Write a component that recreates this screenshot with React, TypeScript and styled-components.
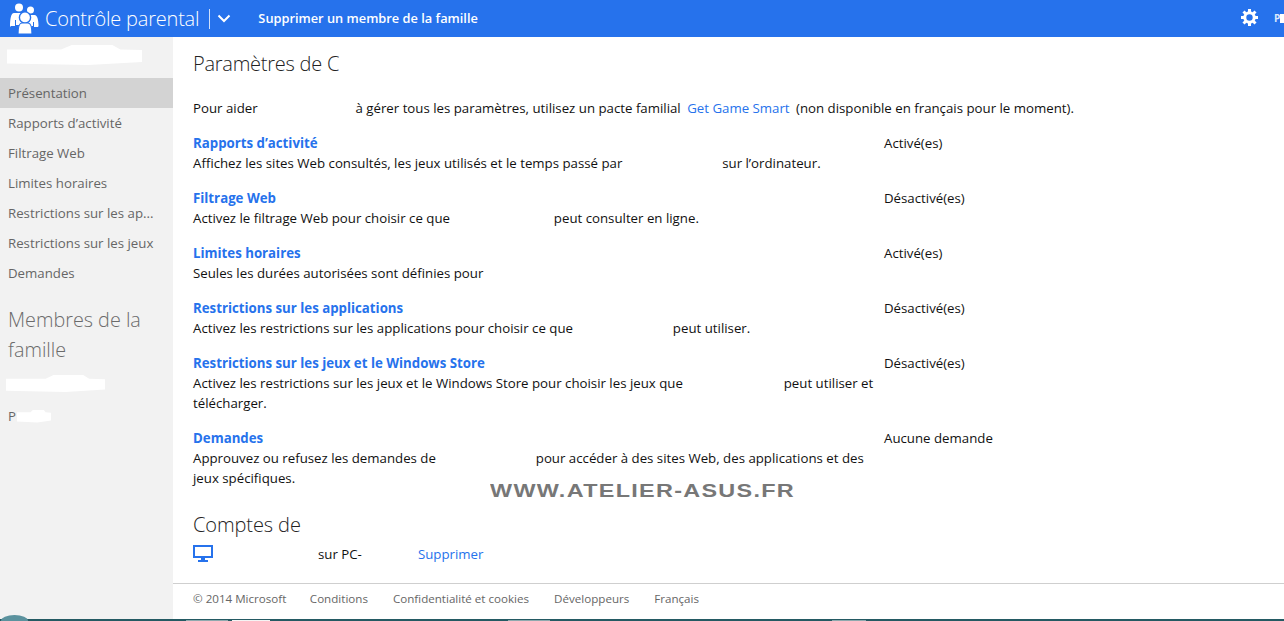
import React from 'react'
import styled, { createGlobalStyle } from 'styled-components'

const GlobalStyle = createGlobalStyle`
  html, body {
    margin: 0;
    height: 100%;
    overflow: hidden;
    background: #fff;
  }
  body {
    font-family: "Open Sans", "Noto Sans", sans-serif;
    font-size: 13.25px;
    color: #111;
  }
`

const Page = styled.div`
  position: relative;
  width: 1284px;
  height: 621px;
  display: flex;
  flex-direction: column;
  overflow: hidden;
`

const TopBar = styled.header`
  height: 37px;
  flex: none;
  background: #2672ec;
  color: #fff;
  display: flex;
  align-items: center;
  padding-left: 10px;
  overflow: hidden;
`

const AppTitle = styled.div`
  font-size: 20px;
  font-weight: 300;
  margin-left: 6px;
  letter-spacing: -0.2px;
  white-space: nowrap;
`

const Divider = styled.span`
  width: 1px;
  height: 20px;
  background: #cfe0fb;
  margin-left: 10px;
`

const Chevron = styled.svg`
  width: 14px;
  height: 9px;
  margin-left: 7px;
`

const BarAction = styled.div`
  font-size: 12.8px;
  font-weight: 600;
  margin-left: 27px;
  margin-bottom: 1px;
  white-space: nowrap;
`

const BarRight = styled.div`
  margin-left: auto;
  display: flex;
  align-items: center;
  gap: 16px;
  width: 43px;
  flex: none;
`

const GearWrap = styled.span`
  display: flex;
  margin-bottom: 3px;
`

const UserInitial = styled.span`
  font-size: 10px;
  font-weight: 700;
  color: #dce8fc;
  display: flex;
  align-items: center;
  margin-bottom: 1px;
`

const UserBlot = styled.span`
  width: 5px;
  height: 9px;
  background: #fff;
`

const Body = styled.div`
  flex: 1;
  display: flex;
  min-height: 0;
`

const Sidebar = styled.aside`
  width: 173px;
  flex: none;
  background: #f2f2f2;
  color: #666;
  padding-top: 8px;
`

const Blot = styled.div<{ $w: number; $h: number; $ml?: number; $mt?: number }>`
  width: ${(p) => p.$w}px;
  height: ${(p) => p.$h}px;
  margin-left: ${(p) => p.$ml ?? 0}px;
  margin-top: ${(p) => p.$mt ?? 0}px;
  background: #fff;
  clip-path: polygon(0 22%, 40% 22%, 48% 0, 78% 0, 84% 22%, 100% 25%, 100% 85%, 60% 100%, 0 92%);
`

const NavList = styled.nav`
  margin-top: 13px;
`

const NavItem = styled.div<{ $active?: boolean }>`
  height: 30px;
  line-height: 30px;
  padding-left: 8px;
  background: ${(p) => (p.$active ? '#d3d3d3' : 'transparent')};
  white-space: nowrap;
  overflow: hidden;
`

const SideHeading = styled.div`
  font-size: 19.8px;
  font-weight: 300;
  line-height: 30px;
  padding: 17px 8px 0;
  color: #6b6b6b;
`

const MemberRow = styled.div`
  display: flex;
  align-items: center;
  padding-left: 8px;
  margin-top: 14px;
  height: 20px;
`

const Main = styled.main`
  flex: 1;
  min-width: 0;
  display: flex;
  flex-direction: column;
`

const Content = styled.div`
  flex: 1;
  padding: 0 20px;
`

const PageTitle = styled.h1`
  margin: 0;
  padding-top: 12px;
  font-size: 20px;
  line-height: 30px;
  font-weight: 300;
  letter-spacing: -0.25px;
  color: #222;
`

const Intro = styled.p`
  margin: 19px 0 0;
  line-height: 20px;
  white-space: nowrap;
`

const InlineLink = styled.span`
  color: #2672ec;
  margin: 0 3px;
`

const Gap = styled.span<{ $w: number }>`
  display: inline-block;
  width: ${(p) => p.$w}px;
`

const SettingRow = styled.div`
  display: grid;
  grid-template-columns: 691px 1fr;
  padding-top: 15px;
  line-height: 20px;
`

const SettingName = styled.div`
  color: #2672ec;
  font-weight: 700;
`

const SettingText = styled.div`
  width: 685px;
`

const SettingState = styled.div``

const SubTitle = styled.h2`
  margin: 22px 0 0;
  font-size: 20px;
  line-height: 30px;
  font-weight: 300;
  letter-spacing: -0.1px;
  color: #222;
`

const AccountRow = styled.div`
  display: flex;
  align-items: center;
  height: 20px;
  margin-top: 4px;
`

const PcIcon = styled.svg`
  width: 20px;
  height: 18px;
  flex: none;
`

const AccountPc = styled.span`
  margin-left: 105px;
`

const RemoveLink = styled.span`
  margin-left: 56px;
  color: #2672ec;
`

const Footer = styled.footer`
  height: 36px;
  flex: none;
  border-top: 1px solid #cfcfcf;
  padding: 6px 20px 0;
  display: flex;
  gap: 25px;
  font-size: 11.6px;
  line-height: 18px;
  color: #666;
  box-sizing: border-box;
`

const Copyright = styled.span`
  margin-right: -1.5px;
`

const Taskbar = styled.div`
  height: 2px;
  flex: none;
  background: #245a63;
  position: relative;
`

const TaskbarTab = styled.span<{ $x: number; $w: number; $light?: boolean }>`
  position: absolute;
  top: 1px;
  left: ${(p) => p.$x}px;
  width: ${(p) => p.$w}px;
  height: 1px;
  background: ${(p) => (p.$light ? '#f4f4f4' : '#8fa9ae')};
`

const StartOrb = styled.span`
  position: absolute;
  left: 1px;
  bottom: 0;
  width: 27px;
  height: 6px;
  border-radius: 14px 14px 0 0 / 6px 6px 0 0;
  background: #5b929e;
`

const Watermark = styled.div`
  position: absolute;
  left: 490px;
  top: 484px;
  font-family: "Liberation Sans", sans-serif;
  font-size: 18px;
  font-weight: 700;
  line-height: 14px;
  color: #777;
  letter-spacing: 1px;
  transform: scaleX(1.3);
  transform-origin: left center;
  white-space: nowrap;
`

type Setting = {
  name: string
  state: string
  text: React.ReactNode
}

const settings: Setting[] = [
  {
    name: 'Rapports d’activité',
    state: 'Activé(es)',
    text: <>Affichez les sites Web consultés, les jeux utilisés et le temps passé par <Gap $w={93} /> sur l’ordinateur.</>,
  },
  {
    name: 'Filtrage Web',
    state: 'Désactivé(es)',
    text: <>Activez le filtrage Web pour choisir ce que <Gap $w={97} /> peut consulter en ligne.</>,
  },
  {
    name: 'Limites horaires',
    state: 'Activé(es)',
    text: <>Seules les durées autorisées sont définies pour</>,
  },
  {
    name: 'Restrictions sur les applications',
    state: 'Désactivé(es)',
    text: <>Activez les restrictions sur les applications pour choisir ce que <Gap $w={93} /> peut utiliser.</>,
  },
  {
    name: 'Restrictions sur les jeux et le Windows Store',
    state: 'Désactivé(es)',
    text: <>Activez les restrictions sur les jeux et le Windows Store pour choisir les jeux que <Gap $w={94} /> peut utiliser et télécharger.</>,
  },
  {
    name: 'Demandes',
    state: 'Aucune demande',
    text: <>Approuvez ou refusez les demandes de <Gap $w={93} /> pour accéder à des sites Web, des applications et des jeux spécifiques.</>,
  },
]

const navItems = [
  'Présentation',
  'Rapports d’activité',
  'Filtrage Web',
  'Limites horaires',
  'Restrictions sur les ap...',
  'Restrictions sur les jeux',
  'Demandes',
]

const FamilyIcon = () => (
  <svg width="29" height="31" viewBox="0 0 29 31" fill="#fff" style={{ flex: 'none' }}>
    <circle cx="9" cy="4.500" r="4" />
    <circle cx="20.500" cy="7" r="3.500" />
    <path d="M0 24c0-8 1-14 4-14h9c2 0 3 1 3 2v10H6v-5H5v6H1z" />
    <path d="M28.500 23c0-6-1-11-4-11H17v11h6v-4h1v5h4z" />
    <circle cx="15" cy="14.500" r="5.600" stroke="#2672ec" strokeWidth="1.400" />
    <path d="M8 31c0-7 1-11 4-11h6c3 0 4 4 4 11z" stroke="#2672ec" strokeWidth="1.200" />
  </svg>
)

const GearIcon = () => (
  <svg width="17" height="17" viewBox="0 0 17 17" style={{ display: 'block' }}>
    <circle cx="8.500" cy="8.500" r="4.700" fill="none" stroke="#fff" strokeWidth="3" />
    <path
      d="M8.500 0v3M8.500 14v3M0 8.500h3M14 8.500h3M2.500 2.500l2 2M12.500 12.500l2 2M14.500 2.500l-2 2M4.500 12.500l-2 2"
      stroke="#fff"
      strokeWidth="3"
    />
  </svg>
)

export default function App() {
  return (
    <Page>
      <GlobalStyle />
      <TopBar>
        <FamilyIcon />
        <AppTitle>Contrôle parental</AppTitle>
        <Divider />
        <Chevron viewBox="0 0 14 9">
          <path d="M1.500 1.500L7 7l5.500-5.500" fill="none" stroke="#fff" strokeWidth="2" />
        </Chevron>
        <BarAction>Supprimer un membre de la famille</BarAction>
        <BarRight>
          <GearWrap>
            <GearIcon />
          </GearWrap>
          <UserInitial>P<UserBlot /></UserInitial>
        </BarRight>
      </TopBar>
      <Body>
        <Sidebar>
          <Blot $w={135} $h={20} $ml={7} />
          <NavList>
            {navItems.map((item, i) => (
              <NavItem key={item} $active={i === 0}>{item}</NavItem>
            ))}
          </NavList>
          <SideHeading>Membres de la famille</SideHeading>
          <Blot $w={99} $h={17} $ml={6} $mt={10} />
          <MemberRow>
            P<Blot $w={34} $h={13} $ml={1} />
          </MemberRow>
        </Sidebar>
        <Main>
          <Content>
            <PageTitle>Paramètres de C</PageTitle>
            <Intro>
              Pour aider <Gap $w={91} /> à gérer tous les paramètres, utilisez un pacte familial
              <InlineLink> Get Game Smart </InlineLink>
              (non disponible en français pour le moment).
            </Intro>
            {settings.map((s) => (
              <SettingRow key={s.name}>
                <div>
                  <SettingName>{s.name}</SettingName>
                  <SettingText>{s.text}</SettingText>
                </div>
                <SettingState>{s.state}</SettingState>
              </SettingRow>
            ))}
            <SubTitle>Comptes de</SubTitle>
            <AccountRow>
              <PcIcon viewBox="0 0 20 18">
                <path d="M1 1h18v11H1z" fill="none" stroke="#2672ec" strokeWidth="2" />
                <path d="M8 13h4v2h3v2H5v-2h3z" fill="#2672ec" />
              </PcIcon>
              <AccountPc>sur PC-</AccountPc>
              <RemoveLink>Supprimer</RemoveLink>
            </AccountRow>
          </Content>
          <Footer>
            <Copyright>© 2014 Microsoft</Copyright>
            <span>Conditions</span>
            <span>Confidentialité et cookies</span>
            <span>Développeurs</span>
            <span>Français</span>
          </Footer>
        </Main>
      </Body>
      <Taskbar>
        <StartOrb />
        <TaskbarTab $x={186} $w={42} />
        <TaskbarTab $x={232} $w={38} $light />
        <TaskbarTab $x={508} $w={42} />
        <TaskbarTab $x={832} $w={34} />
      </Taskbar>
      <Watermark>WWW.ATELIER-ASUS.FR</Watermark>
    </Page>
  )
}
